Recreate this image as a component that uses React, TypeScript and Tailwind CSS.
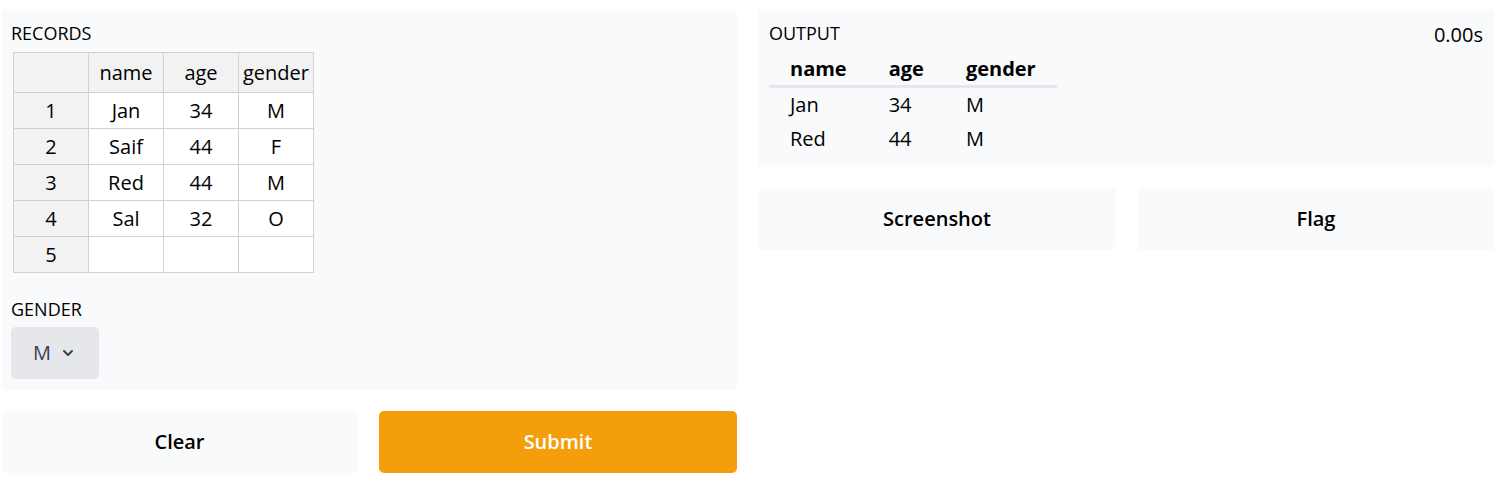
import React from 'react';

const records = [
  ['1', 'Jan', '34', 'M'],
  ['2', 'Saif', '44', 'F'],
  ['3', 'Red', '44', 'M'],
  ['4', 'Sal', '32', 'O'],
  ['5', '', '', ''],
];

const output = [
  ['Jan', '34', 'M'],
  ['Red', '44', 'M'],
];

const Label: React.FC<{ children: React.ReactNode }> = ({ children }) => (
  <div className="text-[18px] leading-[20px] font-medium text-black">{children}</div>
);

export default function App() {
  return (
    <div className="flex gap-[21px] pl-[1px] pr-[9px] pt-[9px] font-['Open_Sans',sans-serif] text-black bg-white">
      {/* left column */}
      <div className="w-[736px] flex flex-col gap-[21px]">
        <div className="bg-gray-50 rounded-[5px] px-[10px] pt-[14px] pb-[11px]">
          <Label>RECORDS</Label>
          <table className="mt-[9px] ml-[2px] table-fixed border-collapse w-[301px] text-[20px] text-center">
            <thead>
              <tr className="h-[40px] bg-[#f2f2f2]">
                <th className="w-[75px] border border-[#d1d1d1] font-normal"></th>
                <th className="w-[75px] border border-[#d1d1d1] font-normal">name</th>
                <th className="w-[75px] border border-[#d1d1d1] font-normal">age</th>
                <th className="w-[75px] border border-[#d1d1d1] font-normal">gender</th>
              </tr>
            </thead>
            <tbody>
              {records.map(r => (
                <tr key={r[0]} className="h-[36px]">
                  <td className="border border-[#d1d1d1] bg-[#f2f2f2]">{r[0]}</td>
                  <td className="border border-[#d1d1d1] bg-white">{r[1]}</td>
                  <td className="border border-[#d1d1d1] bg-white">{r[2]}</td>
                  <td className="border border-[#d1d1d1] bg-white">{r[3]}</td>
                </tr>
              ))}
            </tbody>
          </table>
          <div className="mt-[26px]">
            <Label>GENDER</Label>
          </div>
          <div className="mt-[8px] w-[88px] h-[52px] rounded-[5px] bg-[#e5e7eb] flex items-center pl-[22px] gap-[11px] text-[20px] text-gray-700">
            <span>M</span>
            <svg width="12" height="8" viewBox="0 0 12 8" fill="none">
              <polyline points="2,2 6,6 10,2" stroke="#374151" strokeWidth="2" strokeLinecap="round" strokeLinejoin="round" />
            </svg>
          </div>
        </div>
        <div className="flex gap-[21px]">
          <button className="w-[357px] h-[62px] rounded-[5px] bg-gray-50 text-[20px] font-semibold text-black">Clear</button>
          <button className="flex-1 h-[62px] rounded-[5px] bg-[#f59e0b] text-[20px] font-semibold text-white">Submit</button>
        </div>
      </div>

      {/* right column */}
      <div className="flex-1 flex flex-col gap-[21px]">
        <div className="relative bg-gray-50 rounded-[5px] px-[11px] pt-[14px] pb-[11px]">
          <Label>OUTPUT</Label>
          <div className="absolute top-[12px] right-[12px] text-[20px] leading-[28px] text-black">0.00s</div>
          <table className="mt-[9px] border-collapse text-[20px] leading-[28px] text-left">
            <thead>
              <tr className="border-b-[3px] border-[#e5e7eb]">
                <th className="px-[21px] pt-[3px] pb-[2px] font-bold">name</th>
                <th className="px-[21px] pt-[3px] pb-[2px] font-bold">age</th>
                <th className="px-[21px] pt-[3px] pb-[2px] font-bold">gender</th>
              </tr>
            </thead>
            <tbody>
              {output.map(r => (
                <tr key={r[0]}>
                  <td className="px-[21px] py-[3px]">{r[0]}</td>
                  <td className="px-[21px] py-[3px]">{r[1]}</td>
                  <td className="px-[21px] py-[3px]">{r[2]}</td>
                </tr>
              ))}
            </tbody>
          </table>
        </div>
        <div className="flex gap-[21px]">
          <button className="w-[358px] h-[62px] rounded-[5px] bg-gray-50 text-[20px] font-semibold text-black">Screenshot</button>
          <button className="flex-1 h-[62px] rounded-[5px] bg-gray-50 text-[20px] font-semibold text-black">Flag</button>
        </div>
      </div>
    </div>
  );
}
